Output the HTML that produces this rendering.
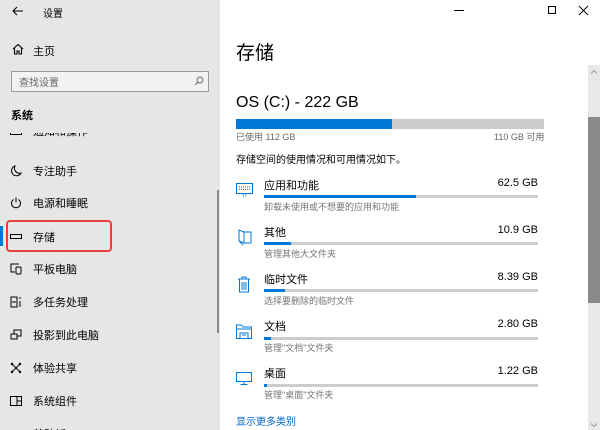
<!DOCTYPE html>
<html><head><meta charset="utf-8">
<style>
*{margin:0;padding:0;box-sizing:border-box}
body{width:600px;height:430px;overflow:hidden;position:relative;background:#fff;font-family:"Liberation Sans","Noto Sans CJK SC",sans-serif;color:#000}
.a{position:absolute;white-space:nowrap}
#side{position:absolute;left:0;top:0;width:220px;height:430px;background:#e6e6e6}
.si{position:absolute;left:0;width:220px;height:33px}
.si .t{position:absolute;left:33px;top:50%;transform:translateY(-50%);font-size:11px;color:#000}
.si svg{position:absolute;left:10px;top:50%;transform:translateY(-50%)}
.bar{position:absolute;height:3px;background:#ccc}
.bar i{position:absolute;left:0;top:0;height:3px;background:#0078d7}
.it{font-size:11px}
.sub{font-size:9px;color:#767676}
.sz{font-size:11px;text-align:right}
svg{overflow:visible}
</style></head><body>
<div id="side">
  <svg class="a" style="left:12px;top:6px" width="12" height="10" viewBox="0 0 12 10"><path d="M11 5H1M5 1L1 5l4 4" fill="none" stroke="#000" stroke-width="1"/></svg>
  <div class="a" style="left:43px;top:5px;font-size:10px">设置</div>
  <svg class="a" style="left:12px;top:43px" width="12" height="12" viewBox="0 0 12 12"><path d="M1 6L6 1.5 11 6M2.5 5v6h2.5V8h2v3h2.5V5" fill="none" stroke="#000" stroke-width="1.1"/></svg>
  <div class="a" style="left:33px;top:43px;font-size:11px">主页</div>
  <div class="a" style="left:11px;top:71px;width:198px;height:21px;border:1px solid #999;background:#f2f2f2"></div>
  <div class="a" style="left:19px;top:74px;font-size:10px;color:#666">查找设置</div>
  <svg class="a" style="left:194px;top:76px" width="10" height="10" viewBox="0 0 10 10"><circle cx="6" cy="4" r="3" fill="none" stroke="#666" stroke-width="0.9"/><path d="M4 6L1 9" stroke="#666" stroke-width="0.9"/></svg>
  <div class="a" style="left:11px;top:107px;font-size:11px;font-weight:bold">系统</div>
  <div style="position:absolute;left:0;top:133px;width:220px;height:297px;overflow:hidden">
    <div class="si" style="top:-19px"><svg width="12" height="8" viewBox="0 0 12 8"><path d="M0.5 0.5v7h11v-7" fill="none" stroke="#000"/></svg><div class="t">通知和操作</div></div>
    <div class="si" style="top:21px"><svg width="12" height="12" viewBox="0 0 12 12"><path d="M5 1a5 5 0 1 0 6 7A5 5 0 0 1 5 1z" fill="none" stroke="#000"/></svg><div class="t">专注助手</div></div>
    <div class="si" style="top:53px"><svg width="12" height="12" viewBox="0 0 12 12"><path d="M3.5 2.5a4.5 4.5 0 1 0 5 0M6 0.5v5" fill="none" stroke="#000"/></svg><div class="t">电源和睡眠</div></div>
    <div class="si" style="top:87px"><svg width="12" height="6" viewBox="0 0 12 6"><rect x="0.5" y="0.5" width="11" height="4" fill="none" stroke="#000"/></svg><div class="t">存储</div></div>
    <div class="si" style="top:119px"><svg width="12" height="12" viewBox="0 0 12 12"><path d="M9 1H1v8h4" fill="none" stroke="#000"/><rect x="6" y="4" width="5" height="7" rx="1" fill="none" stroke="#000"/></svg><div class="t">平板电脑</div></div>
    <div class="si" style="top:152px"><svg width="12" height="12" viewBox="0 0 12 12"><path d="M0.5 1h7M0.5 11h7M1 1v10M7 1v10M2 6h4" fill="none" stroke="#000"/><path d="M10 1v2M10 5v6" stroke="#000"/></svg><div class="t">多任务处理</div></div>
    <div class="si" style="top:185px"><svg width="12" height="12" viewBox="0 0 12 12"><rect x="4" y="1" width="7" height="6" fill="none" stroke="#000"/><rect x="1" y="5" width="6" height="5" fill="#e6e6e6" stroke="#000"/></svg><div class="t">投影到此电脑</div></div>
    <div class="si" style="top:218px"><svg width="12" height="12" viewBox="0 0 12 12"><path d="M2 2l8 8M10 2l-8 8" stroke="#000"/><circle cx="2" cy="2" r="1.2" fill="#000"/><circle cx="10" cy="2" r="1.2" fill="#000"/><circle cx="2" cy="10" r="1.2" fill="#000"/><circle cx="10" cy="10" r="1.2" fill="#000"/></svg><div class="t">体验共享</div></div>
    <div class="si" style="top:251px"><svg width="12" height="10" viewBox="0 0 12 10"><rect x="0.5" y="0.5" width="11" height="9" fill="none" stroke="#000"/><path d="M7 0.5v9M7 5h4.5" stroke="#000"/></svg><div class="t">系统组件</div></div>
    <div class="si" style="top:284px"><div class="t">剪贴板</div></div>
  </div>
  <div class="a" style="left:0;top:226px;width:3px;height:20px;background:#0078d7"></div>
  <div class="a" style="left:6px;top:220px;width:106px;height:32px;border:2px solid #e8413c;border-radius:4px"></div>
  <div class="a" style="left:217px;top:190px;width:2px;height:143px;background:#8a8a8a"></div>
</div>

<div class="a" style="left:454px;top:10px;width:10px;height:1px;background:#000"></div>
<div class="a" style="left:548px;top:6px;width:8px;height:8px;border:1px solid #000"></div>
<svg class="a" style="left:579px;top:6px" width="9" height="9" viewBox="0 0 9 9"><path d="M0 0l9 9M9 0L0 9" stroke="#000" stroke-width="0.9"/></svg>

<div class="a" style="left:236px;top:38px;font-size:19px">存储</div>
<div class="a" style="left:236px;top:94px;font-size:16px">OS (C:) - 222 GB</div>
<div class="a" style="left:236px;top:119px;width:308px;height:10px;background:#ccc"><div style="width:156px;height:10px;background:#0078d7"></div></div>
<div class="a" style="left:236px;top:130px;font-size:9px;color:#666">已使用 112 GB</div>
<div class="a" style="left:494px;top:130px;font-size:9px;color:#666">110 GB 可用</div>
<div class="a" style="left:236px;top:151px;font-size:10px">存储空间的使用情况和可用情况如下。</div>

<svg class="a" style="left:236px;top:183px" width="17" height="14" viewBox="0 0 17 14"><rect x="0.5" y="0.5" width="16" height="10" fill="none" stroke="#0078d7"/><path d="M3 4h11M3 6.5h11M7 11v2h3v-2" stroke="#0078d7" stroke-dasharray="1 1" fill="none"/></svg>
<div class="a it" style="left:264px;top:177px">应用和功能</div>
<div class="a sz" style="left:480px;top:177px;width:58px">62.5 GB</div>
<div class="bar" style="left:264px;top:195px;width:274px"><i style="width:152px"></i></div>
<div class="a sub" style="left:264px;top:200px">卸载未使用或不想要的应用和功能</div>

<svg class="a" style="left:238px;top:229px" width="14" height="17" viewBox="0 0 14 17"><path d="M1 1l5 2v11l-5-2zM6 3h7v11H6M1 12l4 4" fill="none" stroke="#0078d7"/></svg>
<div class="a it" style="left:264px;top:224px">其他</div>
<div class="a sz" style="left:480px;top:224px;width:58px">10.9 GB</div>
<div class="bar" style="left:264px;top:242px;width:274px"><i style="width:27px"></i></div>
<div class="a sub" style="left:264px;top:247px">管理其他大文件夹</div>

<svg class="a" style="left:238px;top:276px" width="12" height="17" viewBox="0 0 12 17"><path d="M0 3h12M4 3V1h4v2M1.5 3v13h9V3M4 6v8M6 6v8M8 6v8" fill="none" stroke="#0078d7"/></svg>
<div class="a it" style="left:264px;top:271px">临时文件</div>
<div class="a sz" style="left:480px;top:271px;width:58px">8.39 GB</div>
<div class="bar" style="left:264px;top:289px;width:274px"><i style="width:21px"></i></div>
<div class="a sub" style="left:264px;top:294px">选择要删除的临时文件</div>

<svg class="a" style="left:236px;top:324px" width="16" height="15" viewBox="0 0 16 15"><path d="M0.5 1h5l1.5 2h8.5v11.5H0.5zM0.5 5h15M4 14.5V9h8v5.5M6 11h4" fill="none" stroke="#0078d7"/></svg>
<div class="a it" style="left:264px;top:318px">文档</div>
<div class="a sz" style="left:480px;top:318px;width:58px">2.80 GB</div>
<div class="bar" style="left:264px;top:337px;width:274px"><i style="width:7px"></i></div>
<div class="a sub" style="left:264px;top:341px">管理"文档"文件夹</div>

<svg class="a" style="left:236px;top:372px" width="16" height="13" viewBox="0 0 16 13"><rect x="0.5" y="0.5" width="15" height="9" fill="none" stroke="#0078d7"/><path d="M8 10v2M4.5 12.5h7" stroke="#0078d7"/></svg>
<div class="a it" style="left:264px;top:365px">桌面</div>
<div class="a sz" style="left:480px;top:365px;width:58px">1.22 GB</div>
<div class="bar" style="left:264px;top:384px;width:274px"><i style="width:3px"></i></div>
<div class="a sub" style="left:264px;top:388px">管理"桌面"文件夹</div>

<div class="a" style="left:236px;top:413px;font-size:10px;color:#0066cc">显示更多类别</div>

<div class="a" style="left:588px;top:65px;width:12px;height:365px;background:#e8e8e8"></div>
<div class="a" style="left:588px;top:117px;width:12px;height:186px;background:#8a8a8a"></div>
<svg class="a" style="left:591px;top:70px" width="6" height="4" viewBox="0 0 6 4"><path d="M0 3.5L3 0.5 6 3.5" fill="none" stroke="#888" stroke-width="0.8"/></svg>
<svg class="a" style="left:591px;top:423px" width="6" height="4" viewBox="0 0 6 4"><path d="M0 0.5L3 3.5 6 0.5" fill="none" stroke="#888" stroke-width="0.8"/></svg>
</body></html>
